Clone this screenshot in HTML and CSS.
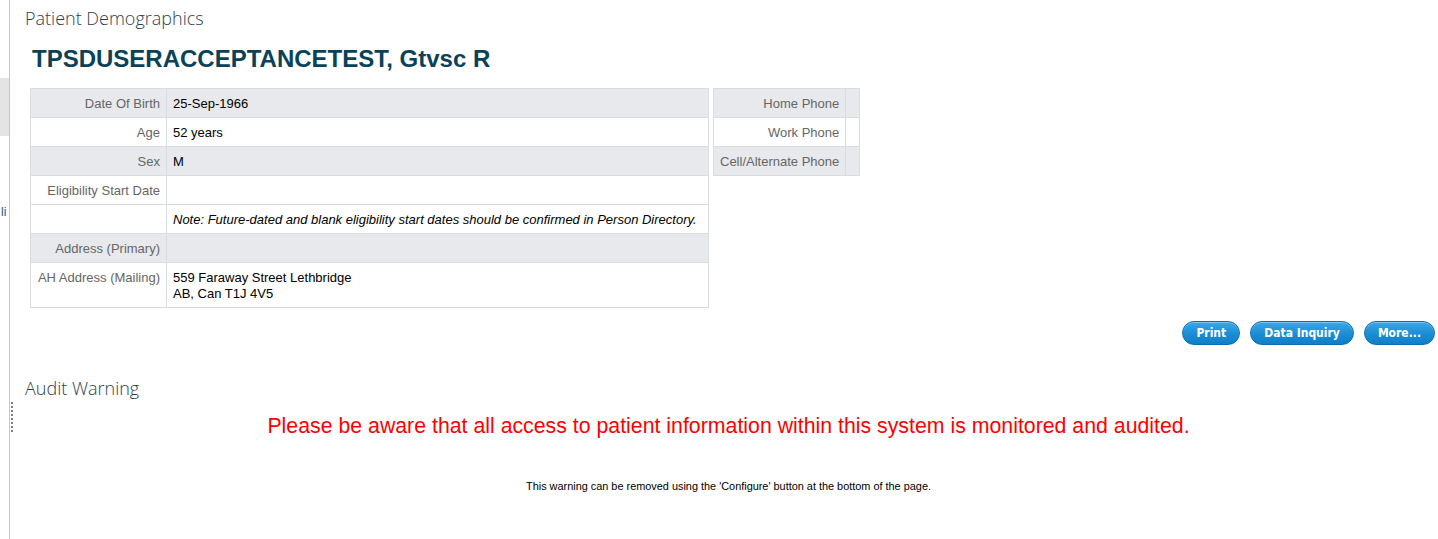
FILE: index.html
```html
<!DOCTYPE html>
<html lang="en">
<head>
  <meta charset="UTF-8" />
  <title>Patient Demographics</title>
  <link rel="stylesheet" href="styles.css">
</head>
<body>
  <div class="layout">
    <div class="sidebar">
      <div class="side-block"></div>
      <div class="side-link">li</div>
    </div>
    <div class="grip"></div>

    <div class="main">
      <h3 class="section-title">Patient Demographics</h3>
      <h1 class="patient-name">TPSDUSERACCEPTANCETEST, Gtvsc R</h1>

      <div class="tables">
        <table class="demo main-info">
          <tr class="alt">
            <th>Date Of Birth</th>
            <td>25-Sep-1966</td>
          </tr>
          <tr>
            <th>Age</th>
            <td>52 years</td>
          </tr>
          <tr class="alt">
            <th>Sex</th>
            <td>M</td>
          </tr>
          <tr>
            <th>Eligibility Start Date</th>
            <td></td>
          </tr>
          <tr>
            <th></th>
            <td class="note">Note: Future-dated and blank eligibility start dates should be confirmed in Person Directory.</td>
          </tr>
          <tr class="alt">
            <th>Address (Primary)</th>
            <td></td>
          </tr>
          <tr class="tall">
            <th>AH Address (Mailing)</th>
            <td>559 Faraway Street Lethbridge<br>AB, Can T1J 4V5</td>
          </tr>
        </table>

        <table class="demo phones">
          <tr class="alt">
            <th>Home Phone</th>
            <td></td>
          </tr>
          <tr>
            <th>Work Phone</th>
            <td></td>
          </tr>
          <tr class="alt">
            <th>Cell/Alternate Phone</th>
            <td></td>
          </tr>
        </table>
      </div>

      <div class="buttons">
        <button type="button">Print</button>
        <button type="button">Data Inquiry</button>
        <button type="button">More...</button>
      </div>

      <h3 class="section-title audit">Audit Warning</h3>
      <div class="warning">
        <p class="warning-main">Please be aware that all access to patient information within this system is monitored and audited.</p>
        <p class="warning-sub">This warning can be removed using the 'Configure' button at the bottom of the page.</p>
      </div>
    </div>
  </div>
</body>
</html>
```

FILE: styles.css
```css
body {
  margin: 0;
  padding: 0;
  background: #fff;
  font-family: "Liberation Sans", Arial, sans-serif;
  overflow: hidden;
}
.layout {
  display: flex;
  height: 539px;
  position: relative;
}
.sidebar {
  width: 9px;
  border-right: 1px solid #c8c8c8;
  overflow: hidden;
  flex-shrink: 0;
}
.side-block {
  margin-top: 78px;
  height: 58px;
  background: #e4e4e4;
}
.side-link {
  margin-top: 69px;
  padding-left: 1px;
  font-size: 12px;
  line-height: 14px;
  color: #1a5d8c;
  white-space: nowrap;
}
.grip {
  position: absolute;
  left: 11px;
  top: 402px;
  width: 2px;
  height: 30px;
  background: repeating-linear-gradient(to bottom, #7a7f8c 0, #7a7f8c 2px, transparent 2px, transparent 4px);
}
.main {
  flex: 1;
  padding: 0 3px 0 20px;
}
.section-title {
  font-family: "Open Sans", sans-serif;
  font-weight: 300;
  font-size: 18px;
  color: #2c3e50;
  margin: 6px 0 0 -5px;
  line-height: 25px;
}
.patient-name {
  font-size: 24px;
  font-weight: bold;
  color: #0a4258;
  margin: 13px 0 0 2px;
  line-height: 30px;
}
.tables {
  display: flex;
  align-items: flex-start;
  gap: 4px;
  margin-top: 14px;
}
.demo {
  border-collapse: collapse;
  font-size: 13px;
  border: 1px solid #d9dce1;
}
.demo th,
.demo td {
  border: 1px solid #d9dce1;
  height: 28px;
  padding: 0 6px;
  vertical-align: middle;
}
.demo th {
  text-align: right;
  font-weight: normal;
  color: #666;
  white-space: nowrap;
}
.demo td {
  color: #000;
  text-align: left;
}
.demo tr.alt th,
.demo tr.alt td {
  background: #e7e9ec;
}
.demo tr.tall th,
.demo tr.tall td {
  height: 37px;
  line-height: 16px;
  vertical-align: top;
  padding-top: 7px;
}
.main-info {
  width: 679px;
}
.main-info th {
  width: 123px;
}
.note {
  font-style: italic;
}
.phones th {
  width: 119px;
}
.phones td {
  width: 1px;
}
.buttons {
  display: flex;
  justify-content: flex-end;
  gap: 10px;
  margin-top: 13px;
}
button {
  font-family: "DejaVu Sans Condensed", "DejaVu Sans", Verdana, sans-serif;
  font-weight: bold;
  font-size: 12px;
  color: #fff;
  height: 24px;
  padding: 0 13px;
  border: 1px solid #0a6fb0;
  border-radius: 12px;
  background: linear-gradient(to bottom, #3aa8e8 0%, #1d8fd6 50%, #0f7ec7 100%);
  box-shadow: inset 0 1px 0 rgba(255,255,255,0.35);
  cursor: pointer;
}
.audit {
  margin-top: 31px;
}
.warning {
  text-align: center;
  margin-left: -8px;
}
.warning-main {
  color: #f00;
  font-size: 21.3px;
  margin: 13px 0 0 0;
}
.warning-sub {
  font-size: 10.9px;
  color: #000;
  margin: 41px 0 0 0;
}
```
